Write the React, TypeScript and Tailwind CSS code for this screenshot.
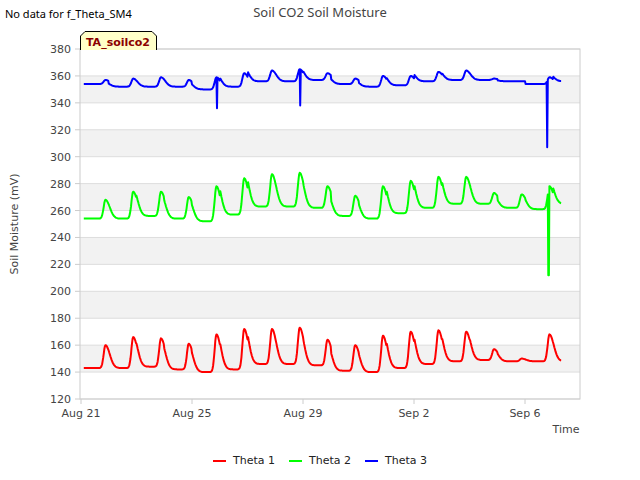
// Soil moisture chart
const X0 = 80, X1 = 580, Y0 = 49, Y1 = 399;
const PX_DAY = 27.75;
const yv = (v: number) => Y0 + ((380 - v) * (Y1 - Y0)) / 260;
const xt = (t: number) => X0 + 1 + t * PX_DAY;

interface Series {
  name: string;
  color: string;
  base: number[];
  peaks: number[];
  spikes: [number, number][];
}

const series: Series[] = [
  {
    name: "Theta 1",
    color: "#ff0000",
    base: [143, 143, 144, 142, 140, 142, 146, 146, 145, 141, 140, 143, 146, 148, 149, 148, 148, 148],
    peaks: [160, 166, 165, 161, 168, 172, 172, 173, 164, 160, 167, 170, 171, 170, 157, 150, 168, 168],
    spikes: [],
  },
  {
    name: "Theta 2",
    color: "#00ff00",
    base: [254, 254, 256, 254, 252, 257, 263, 263, 262, 256, 254, 258, 262, 265, 265, 262, 261, 265],
    peaks: [268, 274, 274, 270, 278, 284, 287, 288, 278, 271, 278, 282, 285, 285, 273, 272, 278, 278],
    spikes: [[16.85, 212]],
  },
  {
    name: "Theta 3",
    color: "#0000ff",
    base: [354, 352, 352, 352, 350, 352, 356, 356, 357, 354, 352, 353, 356, 357, 357, 356, 354, 356],
    peaks: [357, 358, 359, 357, 359, 362, 364, 365, 362, 358, 360, 360, 363, 364, 358, 356, 359, 359],
    spikes: [[4.9, 336], [7.9, 338], [16.8, 307]],
  },
];

function buildPath(s: Series) {
  const pts: string[] = [];
  const end = 17.3;
  for (let t = 0.1; t <= end; t += 0.02) {
    const d = Math.floor(t);
    const bi = Math.min(d, s.base.length - 1);
    let v = s.base[bi];
    for (let k = Math.max(0, d - 1); k <= Math.min(d + 1, s.peaks.length - 1); k++) {
      const p = k + 0.88;
      const dt = t - p;
      const w = dt < 0 ? 0.09 : 0.22;
      v += (s.peaks[k] - s.base[Math.min(k, s.base.length - 1)]) * Math.exp(-(dt / w) * (dt / w));
    }
    for (const [st, sv] of s.spikes) {
      if (Math.abs(t - st) < 0.011) v = sv;
    }
    pts.push(`${xt(t).toFixed(1)},${yv(v).toFixed(1)}`);
  }
  return "M" + pts.join("L");
}

const ticksY = [120, 140, 160, 180, 200, 220, 240, 260, 280, 300, 320, 340, 360, 380];
const ticksX = [
  { l: "Aug 21", d: 0 },
  { l: "Aug 25", d: 4 },
  { l: "Aug 29", d: 8 },
  { l: "Sep 2", d: 12 },
  { l: "Sep 6", d: 16 },
];
const bands = [140, 180, 220, 260, 300, 340];

export default function App() {
  return (
    <div className="relative w-[640px] h-[480px] bg-white font-['DejaVu_Sans',sans-serif] text-[#333]">
      <div className="absolute left-[5px] top-[6px] text-[11px] text-black">No data for f_Theta_SM4</div>
      <div className="absolute left-0 right-0 top-[3px] text-center text-[13px] text-[#444]">Soil CO2 Soil Moisture</div>
      <svg width="640" height="480" className="block" style={{ fontFamily: "DejaVu Sans, sans-serif" }}>
        {bands.map(b => (
          <rect key={b} x={X0} y={yv(b + 20)} width={X1 - X0} height={yv(b) - yv(b + 20)} fill="#f2f2f2" />
        ))}
        {ticksY.map(v => (
          <g key={v}>
            <line x1={X0} x2={X1} y1={yv(v)} y2={yv(v)} stroke="#dddddd" strokeWidth="1" />
            <line x1={X0 - 5} x2={X0} y1={yv(v)} y2={yv(v)} stroke="#ccc" />
            <text x={X0 - 9} y={yv(v) + 4} textAnchor="end" fontSize="11" fill="#444">{v}</text>
          </g>
        ))}
        <rect x={X0} y={Y0} width={X1 - X0} height={Y1 - Y0} fill="none" stroke="#cccccc" />
        {ticksX.map(t => (
          <g key={t.l}>
            <line x1={xt(t.d)} x2={xt(t.d)} y1={Y1} y2={Y1 + 5} stroke="#ccc" />
            <text x={xt(t.d)} y={Y1 + 18} textAnchor="middle" fontSize="11" fill="#444">{t.l}</text>
          </g>
        ))}
        {series.map(s => (
          <path key={s.name} d={buildPath(s)} fill="none" stroke={s.color} strokeWidth="2" strokeLinejoin="round" />
        ))}
        <text x="566" y="433" textAnchor="middle" fontSize="11" fill="#444">Time</text>
        <text x="18" y="224" textAnchor="middle" fontSize="11" fill="#444" transform="rotate(-90 18 224)">Soil Moisture (mV)</text>
        <path d="M80.5,50 L80.5,36 L85,31.5 L152,31.5 L156.5,36 L156.5,50" fill="#ffffc8" stroke="#000" strokeWidth="1" />
        <text x="118" y="46" textAnchor="middle" fontSize="11" fontWeight="bold" fill="#8b0000">TA_soilco2</text>
        {series.map((s, i) => (
          <g key={s.name}>
            <line x1={213 + i * 76} x2={226 + i * 76} y1={461} y2={461} stroke={s.color} strokeWidth="2" />
            <text x={233 + i * 76} y={464} fontSize="11" fill="#222">{s.name}</text>
          </g>
        ))}
      </svg>
    </div>
  );
}
